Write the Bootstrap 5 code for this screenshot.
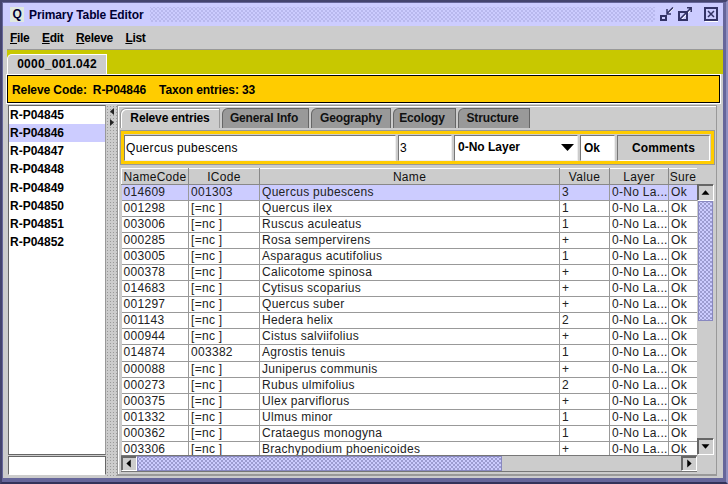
<!DOCTYPE html>
<html lang="en">
<head>
  <meta charset="UTF-8">
  <title>Primary Table Editor</title>
  <link href="https://cdn.jsdelivr.net/npm/bootstrap@5.3.0/dist/css/bootstrap.min.css" rel="stylesheet">
  <style>
    html, body { width: 728px; height: 484px; overflow: hidden; }
    body { background: #66669a; font: 12px "Liberation Sans", Arial, sans-serif; color: #000; line-height: 1; }
    .frame { width: 728px; height: 484px; border: 2px solid #44446e; border-right-color: #8f8fc0; border-bottom-color: #33335a; padding: 1px 3px 4px 1px; }
    .inner { height: 100%; display: flex; flex-direction: column; background: #ccc; }
    .titlebar { height: 23px; flex: none; background: #ccf; padding: 0 5px 0 7px; color: #000033; font-weight: 700; font-size: 12px; letter-spacing: -.1px; }
    .qlogo { width: 14px; height: 15px; background: #dfe8df; text-align: center; line-height: 15px; margin-right: 5px; font-size: 12px; }
    .dots { height: 15px; margin: 0 5px 0 7px; background-image: radial-gradient(#a0a0d8 0.6px, transparent 0.8px), radial-gradient(#a0a0d8 0.6px, transparent 0.8px); background-size: 4px 4px; background-position: 0 0, 2px 2px; }
    .body-wrap { flex: 1; min-height: 0; margin-left: 4px; display: flex; flex-direction: column; }
    .menubar { height: 24px; flex: none; padding-left: 3px; gap: 12.5px; border-bottom: 1px solid #999; font-weight: 700; letter-spacing: -.3px; }
    .menubar u { text-decoration-thickness: 1px; text-underline-offset: 1px; }
    .tabband { height: 24px; flex: none; background: #c8c800; padding: 4px 0 0 0; }
    .doc-tab { display: inline-block; width: 100px; height: 20px; background: #ccc; border: 1px solid #fff; border-bottom: 0; border-top-left-radius: 5px 5px; text-align: center; font-weight: 700; line-height: 19px; font-size: 12px; letter-spacing: .25px; }
    .code-bar { height: 28px; flex: none; margin: 1px 3px 0 0; background: #fc0; border: 1px solid #000; outline: 1px solid #fff; padding: 1px 0 0 4px; font-weight: 700; letter-spacing: -.1px; }
    .code-bar .code { margin: 0 13px 0 6px; }
    .split { flex: 1; min-height: 0; display: flex; padding-top: 2px; }
    .left { width: 98px; flex: none; margin: 0 0 3px 1px; display: flex; flex-direction: column; }
    .rel-list { flex: 1; background: #fff; border: 1px solid #666; border-right-color: #999; }
    .rel-item { height: 18.15px; line-height: 18px; font-weight: 700; padding-left: 1px; font-size: 12px; }
    .rel-item.active { background: #ccf; }
    .filter { height: 19px; flex: none; margin-top: 1px; background: #fff; border: 1px solid #666; border-bottom-color: #fff; }
    .divider { width: 11px; flex: none; padding-top: 2px; background-image: radial-gradient(#999 .6px, transparent .7px); background-size: 3px 3px; }
    .right { flex: 1; min-width: 0; border: 1px solid #999; border-bottom-width: 2px; margin: 0 6px 2px 0; padding: 2px 1px 2px 2px; box-shadow: inset 1px 1px 0 #fff; display: flex; flex-direction: column; }
    .tabs { height: 20px; flex: none; gap: 2px; }
    .tabs span { height: 20px; line-height: 19px; background: #999; border: 1px solid #666; border-bottom: 0; border-top-left-radius: 6px; font-weight: 700; text-align: center; color: #111; letter-spacing: -.15px; }
    .tabs span.active { background: #ccc; border-color: #999; box-shadow: inset 1px 1px 0 #fff; color: #000; }
    .t1 { width: 100px; } .t2 { width: 87px; padding-right: 3px; } .t3 { width: 80px; } .t4 { width: 63px; padding-right: 5px; } .t5 { width: 72px; padding-right: 3px; }
    .editor { height: 35px; flex: none; background: #ccc; border: 4px solid #fc0; outline: 1px solid #999; outline-offset: -1px; margin: 2px 0 3px 0; padding: 0 1px 0 0; gap: 2px; }
    .field { height: 26px; background: #fff; border: 1px solid #777; border-right-color: #eee; border-bottom-color: #eee; line-height: 25px; padding-left: 1px; letter-spacing: .3px; }
    .f-name { width: 272px; } .f-val { width: 54px; }
    .f-layer { width: 124px; font-weight: 700; padding-left: 3px; letter-spacing: 0; justify-content: space-between; padding-right: 3px; }
    .f-ok { width: 35px; font-weight: 700; letter-spacing: 0; padding-left: 3px; }
    .f-btn { width: 93px; height: 26px; background: #ccc; border: 1px solid #777; border-right-color: #fff; border-bottom-color: #fff; font-weight: 700; padding: 0; font-size: 12px; color: #000; letter-spacing: .1px; }
    .grid-wrap { flex: 1; min-height: 0; display: flex; flex-direction: column; margin-left: 1px; }
    .grid-top { flex: 1; min-height: 0; display: flex; }
    .grid-view { width: 576px; flex: none; overflow: hidden; }
    .grid { table-layout: fixed; width: 576px; border-collapse: collapse; font-size: 12px; letter-spacing: .3px; }
    .grid th { height: 16px; padding: 1px 0 0; background: #ccc; border: 1px solid #888; border-top-color: #fff; border-left-color: #fff; font-weight: 400; text-align: center; color: #111; letter-spacing: .3px; line-height: 13px; overflow: hidden; white-space: nowrap; }
    .grid td { height: 16.05px; padding: 0 0 0 2px; background: #fff; border: 1px solid #999; border-top: 0; border-left: 0; overflow: hidden; white-space: nowrap; color: #222; line-height: 15px; }
    .grid tr.sel td { background: #ccf; }
    .vbar { width: 17px; flex: none; padding-top: 16px; display: flex; flex-direction: column; }
    .arrow { flex: none; height: 17px; background: #ccc; border: 1px solid #666; border-right-color: #fff; border-bottom-color: #fff; box-shadow: 1px 1px 0 #666 inset; }
    .thumb-dots { background-color: #ccf; background-image: radial-gradient(#9999cc .7px, transparent .8px), radial-gradient(#9999cc .7px, transparent .8px); background-size: 4px 4px; background-position: 0 0, 2px 2px; }
    .vthumb { height: 120px; flex: none; border: 1px solid #8888c0; margin: 0 1px; }
    .vtrack { flex: 1; }
    .hbar { height: 17px; flex: none; display: flex; border-top: 1px solid #777; border-bottom: 1px solid #777; margin-right: 18px; }
    .hthumb { width: 365px; flex: none; border: 1px solid #8888c0; }
    .hbar .arrow { width: 16px; height: 15px; }
    .arrow svg { display: block; margin: auto; height: 100%; }
  </style>
</head>
<body>
  <div class="frame">
    <div class="inner">
      <div class="titlebar d-flex align-items-center">
        <span class="qlogo">Q</span>
        <span>Primary Table Editor</span>
        <span class="dots flex-grow-1"></span>
        <svg width="58" height="15" viewBox="0 0 58 15" fill="none">
          <g stroke="#fff" stroke-width="1" transform="translate(1 1)">
            <path d="M13 0 L7 6"/><path d="M31 1 L21 11"/><rect x="44.5" y="0.5" width="13" height="13"/>
          </g>
          <g stroke="#333366">
            <rect x="1" y="9" width="5" height="4" stroke-width="2"/><path d="M13 .5 L7 6.5 M7 2 V7 H11" stroke-width="1.5"/>
            <rect x="19" y="5" width="8" height="8" stroke-width="2"/><path d="M20 12 L31 1 M27 .8 H31.2 V5" stroke-width="1.5"/>
            <rect x="45" y="1" width="12" height="12" stroke-width="2"/><path d="M48 4 L54 10 M54 4 L48 10" stroke-width="1.5"/>
          </g>
        </svg>
      </div>
      <div class="body-wrap">
        <div class="menubar d-flex align-items-center">
          <span><u>F</u>ile</span><span><u>E</u>dit</span><span><u>R</u>eleve</span><span><u>L</u>ist</span>
        </div>
        <div class="tabband"><span class="doc-tab">0000_001.042</span></div>
        <div class="code-bar d-flex align-items-center"><span>Releve Code:</span><span class="code">R-P04846</span><span>Taxon entries: 33</span></div>
        <div class="split">
          <div class="left">
            <div class="rel-list" id="relList"></div>
            <div class="filter"></div>
          </div>
          <div class="divider">
            <svg width="6" height="20" viewBox="0 0 6 20" class="d-block mx-auto"><path d="M5 1V8L1 4.5Z M1 12V19L5 15.5Z" fill="#222"/></svg>
          </div>
          <div class="right">
            <div class="tabs d-flex">
              <span class="t1 active">Releve entries</span><span class="t2">General Info</span><span class="t3">Geography</span><span class="t4">Ecology</span><span class="t5">Structure</span>
            </div>
            <div class="editor d-flex align-items-center">
              <div class="field f-name">Quercus pubescens</div>
              <div class="field f-val">3</div>
              <div class="field f-layer d-flex align-items-center"><span>0-No Layer</span><svg width="13" height="7" viewBox="0 0 13 7"><path d="M0 0H13L6.5 7Z" fill="#000"/></svg></div>
              <div class="field f-ok">Ok</div>
              <button class="f-btn" type="button">Comments</button>
            </div>
            <div class="grid-wrap">
              <div class="grid-top">
                <div class="grid-view">
                  <table class="grid">
                    <colgroup><col style="width:67px"><col style="width:71px"><col style="width:300px"><col style="width:50px"><col style="width:59px"><col style="width:29px"></colgroup>
                    <thead><tr><th>NameCode</th><th>ICode</th><th>Name</th><th>Value</th><th>Layer</th><th>Sure</th></tr></thead>
                    <tbody id="rows"></tbody>
                  </table>
                </div>
                <div class="vbar">
                  <div class="arrow"><svg width="9" viewBox="0 0 9 17"><path d="M0 11L4.5 6L9 11Z" fill="#000"/></svg></div>
                  <div class="vthumb thumb-dots"></div>
                  <div class="vtrack"></div>
                  <div class="arrow"><svg width="9" viewBox="0 0 9 17"><path d="M0 6L4.5 11L9 6Z" fill="#000"/></svg></div>
                </div>
              </div>
              <div class="hbar">
                <div class="arrow"><svg width="14" viewBox="0 0 14 15"><path d="M9 3V12L4 7.5Z" fill="#000"/></svg></div>
                <div class="hthumb thumb-dots"></div>
                <div class="flex-grow-1"></div>
                <div class="arrow"><svg width="14" viewBox="0 0 14 15"><path d="M5 3V12L10 7.5Z" fill="#000"/></svg></div>
              </div>
            </div>
          </div>
        </div>
      </div>
    </div>
  </div>
  <script src="https://cdn.jsdelivr.net/npm/bootstrap@5.3.0/dist/js/bootstrap.bundle.min.js"></script>
  <script>
    const releves = ['R-P04845', 'R-P04846', 'R-P04847', 'R-P04848', 'R-P04849', 'R-P04850', 'R-P04851', 'R-P04852'];
    document.getElementById('relList').innerHTML = releves.map(r =>
      `<div class="rel-item ${r === 'R-P04846' ? 'active' : ''}">${r}</div>`).join('');

    const linhas = [
      ['014609', '001303', 'Quercus pubescens', '3'],
      ['001298', '[=nc ]', 'Quercus ilex', '1'],
      ['003006', '[=nc ]', 'Ruscus aculeatus', '1'],
      ['000285', '[=nc ]', 'Rosa sempervirens', '+'],
      ['003005', '[=nc ]', 'Asparagus acutifolius', '1'],
      ['000378', '[=nc ]', 'Calicotome spinosa', '+'],
      ['014683', '[=nc ]', 'Cytisus scoparius', '+'],
      ['001297', '[=nc ]', 'Quercus suber', '+'],
      ['001143', '[=nc ]', 'Hedera helix', '2'],
      ['000944', '[=nc ]', 'Cistus salviifolius', '+'],
      ['014874', '003382', 'Agrostis tenuis', '1'],
      ['000088', '[=nc ]', 'Juniperus communis', '+'],
      ['000273', '[=nc ]', 'Rubus ulmifolius', '2'],
      ['000375', '[=nc ]', 'Ulex parviflorus', '+'],
      ['001332', '[=nc ]', 'Ulmus minor', '1'],
      ['000362', '[=nc ]', 'Crataegus monogyna', '1'],
      ['003306', '[=nc ]', 'Brachypodium phoenicoides', '+']
    ];
    document.getElementById('rows').innerHTML = linhas.map((l, i) =>
      `<tr class="${i === 0 ? 'sel' : ''}"><td>${l[0]}</td><td>${l[1]}</td><td>${l[2]}</td><td>${l[3]}</td><td>0-No La...</td><td>Ok</td></tr>`).join('');
  </script>
</body>
</html>
